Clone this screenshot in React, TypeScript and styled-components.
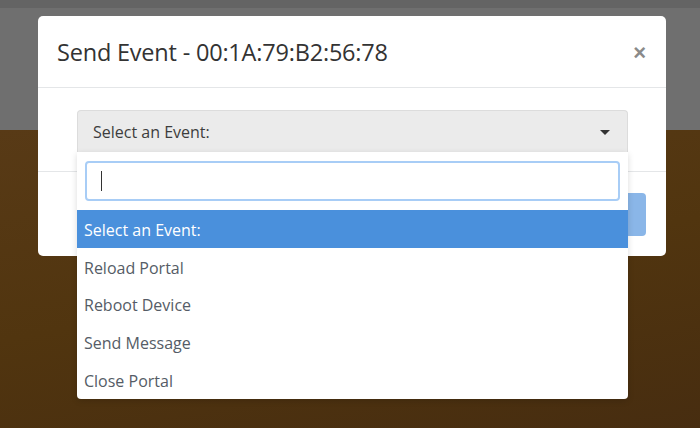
import React from "react"
import styled, { createGlobalStyle } from "styled-components"

const GlobalStyle = createGlobalStyle`
  html, body {
    margin: 0;
    padding: 0;
    width: 700px;
    height: 428px;
    overflow: hidden;
    font-family: "Open Sans", "Liberation Sans", sans-serif;
  }
`

const events = ["Reload Portal", "Reboot Device", "Send Message", "Close Portal"]

function App() {
  return (
    <Page>
      <GlobalStyle />
      <TopBand />
      <BottomBand />
      <Overlay>
        <Modal>
          <ModalHeader>
            <Title>Send Event - 00:1A:79:B2:56:78</Title>
            <CloseButton>×</CloseButton>
          </ModalHeader>
          <ModalBody>
            <SelectBox>
              <SelectLabel>Select an Event:</SelectLabel>
              <Caret />
              <Dropdown>
                <SearchWrap>
                  <SearchInput>
                    <Cursor />
                  </SearchInput>
                </SearchWrap>
                <Option $active>Select an Event:</Option>
                {events.map((e) => (
                  <Option key={e}>{e}</Option>
                ))}
              </Dropdown>
            </SelectBox>
          </ModalBody>
          <ModalFooter>
            <SendButton />
          </ModalFooter>
        </Modal>
      </Overlay>
    </Page>
  )
}

export default App

const Page = styled.div`
  position: relative;
  width: 700px;
  height: 428px;
  display: flex;
  flex-direction: column;
`
const TopBand = styled.div`
  height: 130px;
  background: linear-gradient(#646464 0, #646464 8px, #6f6f6f 8px, #6f6f6f 100%);
`
const BottomBand = styled.div`
  flex: 1;
  background: linear-gradient(170deg, #583a16 0%, #51350f 50%, #472d10 100%);
`
const Overlay = styled.div`
  position: absolute;
  inset: 0;
  padding: 16px 0 0 38px;
`
const Modal = styled.div`
  width: 628px;
  height: 240px;
  background: #fff;
  border-radius: 5px;
  display: flex;
  flex-direction: column;
`
const ModalHeader = styled.div`
  height: 72px;
  box-sizing: border-box;
  padding: 0 20px 0 19px;
  display: flex;
  align-items: center;
  justify-content: space-between;
  border-bottom: 1px solid #e4e6e8;
`
const Title = styled.div`
  font-size: 23.5px;
  color: #333;
  letter-spacing: -0.2px;
  margin-top: 1px;
`
const CloseButton = styled.div`
  font-family: "Liberation Sans", sans-serif;
  font-size: 22px;
  font-weight: bold;
  color: #8a8a8a;
  line-height: 1;
  margin-top: 2px;
`
const ModalBody = styled.div`
  padding: 22px 38px 19px 39px;
  border-bottom: 1px solid #e4e6e8;
`
const SelectBox = styled.div`
  position: relative;
  height: 42px;
  box-sizing: border-box;
  background: #ebebeb;
  border: 1px solid #dcdcdc;
  border-bottom: none;
  border-radius: 4px 4px 0 0;
  display: flex;
  align-items: center;
  justify-content: space-between;
  padding: 1px 17px 0 15px;
`
const SelectLabel = styled.div`
  font-size: 16px;
  font-weight: 500;
  color: #3d3d3d;
`
const Caret = styled.div`
  width: 0;
  height: 0;
  border-left: 5px solid transparent;
  border-right: 5px solid transparent;
  border-top: 5px solid #333;
`
const Dropdown = styled.div`
  position: absolute;
  top: 100%;
  left: -1px;
  right: -1px;
  background: #fff;
  border-radius: 0 0 4px 4px;
  box-shadow: 0 2px 6px rgba(0, 0, 0, 0.15);
  z-index: 2;
`
const SearchWrap = styled.div`
  padding: 9px 8px;
`
const SearchInput = styled.div`
  height: 40px;
  box-sizing: border-box;
  border: 2px solid #a8cdf6;
  border-radius: 4px;
  display: flex;
  align-items: center;
  padding-left: 14px;
`
const Cursor = styled.div`
  width: 1px;
  height: 20px;
  background: #333;
`
const Option = styled.div<{ $active?: boolean }>`
  height: 37.8px;
  box-sizing: border-box;
  display: flex;
  align-items: center;
  padding: 2px 0 0 7px;
  font-size: 16px;
  font-weight: 500;
  color: ${(p) => (p.$active ? "#fff" : "#555c66")};
  background: ${(p) => (p.$active ? "#4a90dc" : "transparent")};
`
const ModalFooter = styled.div`
  flex: 1;
  display: flex;
  justify-content: flex-end;
  align-items: center;
  padding-right: 20px;
`
const SendButton = styled.div`
  width: 90px;
  height: 43px;
  border-radius: 4px;
  background: #8ab6e8;
`
